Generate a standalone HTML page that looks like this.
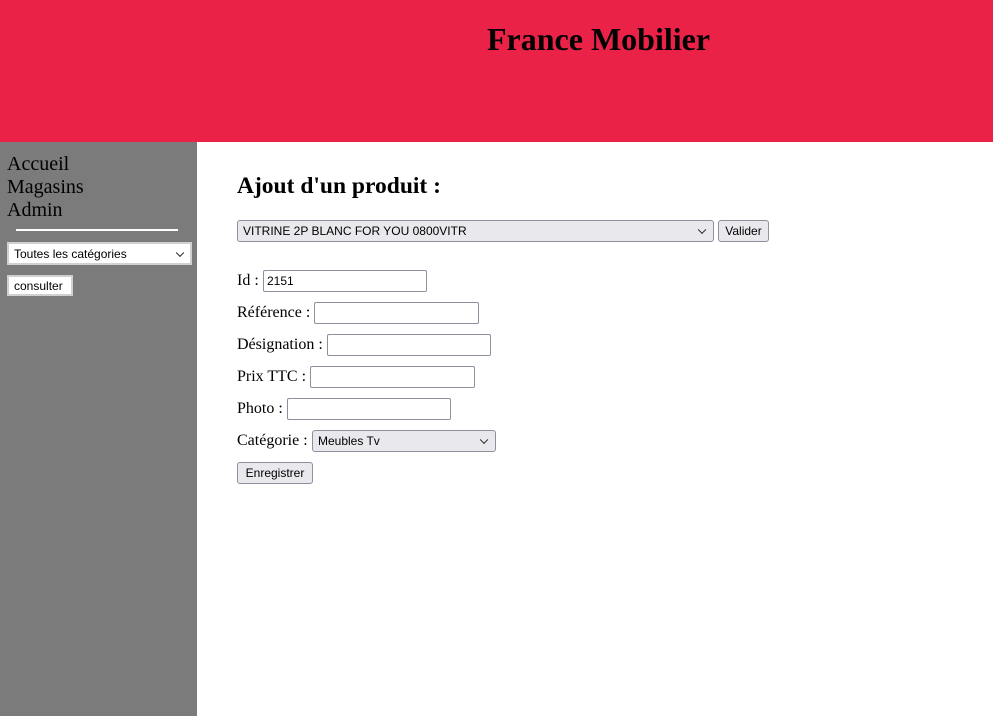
<!DOCTYPE html>
<html><head><meta charset="utf-8"><style>
*{box-sizing:border-box;margin:0;padding:0}
body{width:993px;height:716px;overflow:hidden;position:relative;background:#fff;font-family:"Liberation Serif",serif;color:#000}
.abs{position:absolute}
.hdr{left:0;top:0;width:993px;height:142px;background:#ea2247}
.hdr h1{position:absolute;left:487px;top:21px;font-size:32px;font-weight:bold;white-space:nowrap}
.side{left:0;top:142px;width:197px;height:574px;background:#7b7b7b}
.nav{left:7px;font-size:20px;line-height:23px}
.ctl{font-family:"Liberation Sans",sans-serif;font-size:12px;display:flex;align-items:center;white-space:nowrap}
.sel{background:#e9e9ed;border:1px solid #8f8f9d;border-radius:3px;padding-left:5px}
.arr{position:absolute;right:8px;top:50%;width:6px;height:6px;border-right:1.5px solid #222;border-bottom:1.5px solid #222;transform:translateY(-70%) rotate(45deg)}
.inp{background:#fff;border:1px solid #8f8f9d;border-radius:2px;height:22px;padding-left:3px}
.btn{background:#e9e9ed;border:1px solid #8f8f9d;border-radius:3px;justify-content:center}
.lbl{left:237px;font-size:16px;white-space:nowrap}
</style></head><body>
<div class="abs hdr"><h1>France Mobilier</h1></div>
<div class="abs side"></div>
<div class="abs nav" style="top:153px">Accueil</div>
<div class="abs nav" style="top:176px">Magasins</div>
<div class="abs nav" style="top:199px">Admin</div>
<div class="abs" style="left:16px;top:229px;width:162px;height:2px;background:#fff"></div>
<div class="abs ctl" style="left:7px;top:242px;width:185px;height:23px;background:#fff;border:2px solid #d0d0d0;padding-left:5px">Toutes les catégories<span class="arr" style="right:7px"></span></div>
<div class="abs ctl" style="left:7px;top:275px;width:66px;height:21px;background:#fff;border:2px solid #d0d0d0;padding-left:5px">consulter</div>

<div class="abs" style="left:237px;top:173px;font-size:23.5px;font-weight:bold;white-space:nowrap">Ajout d'un produit :</div>
<div class="abs ctl sel" style="left:237px;top:220px;width:477px;height:22px">VITRINE 2P BLANC FOR YOU 0800VITR<span class="arr"></span></div>
<div class="abs ctl btn" style="left:718px;top:220px;width:51px;height:22px">Valider</div>

<div class="abs lbl" style="top:272px">Id :</div>
<div class="abs ctl inp" style="left:263px;top:270px;width:164px">2151</div>
<div class="abs lbl" style="top:304px">Référence :</div>
<div class="abs ctl inp" style="left:314px;top:302px;width:165px"></div>
<div class="abs lbl" style="top:336px">Désignation :</div>
<div class="abs ctl inp" style="left:327px;top:334px;width:164px"></div>
<div class="abs lbl" style="top:368px">Prix TTC :</div>
<div class="abs ctl inp" style="left:310px;top:366px;width:165px"></div>
<div class="abs lbl" style="top:400px">Photo :</div>
<div class="abs ctl inp" style="left:287px;top:398px;width:164px"></div>
<div class="abs lbl" style="top:432px">Catégorie :</div>
<div class="abs ctl sel" style="left:312px;top:430px;width:184px;height:22px">Meubles Tv<span class="arr"></span></div>
<div class="abs ctl btn" style="left:237px;top:462px;width:76px;height:22px">Enregistrer</div>
</body></html>
